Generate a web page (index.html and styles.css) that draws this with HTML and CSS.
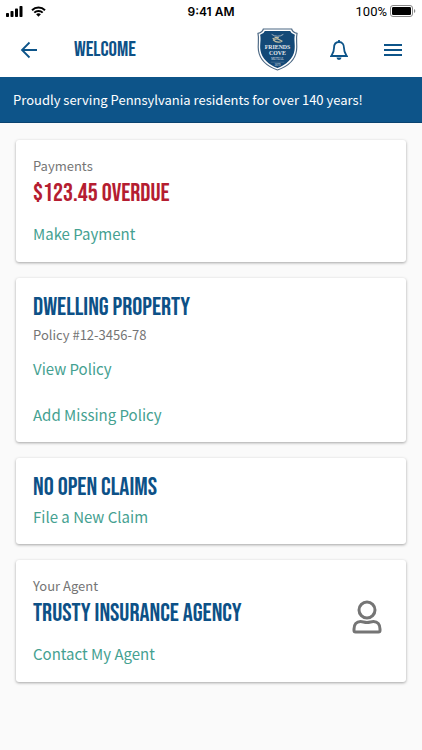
FILE: index.html
```html
<!DOCTYPE html>
<html lang="en">
<head>
    <meta charset="UTF-8">
    <meta name="viewport" content="width=device-width, initial-scale=1.0">
    <title>Friends Cove Mutual</title>
    <link rel="stylesheet" href="styles.css">
</head>
<body>
    <div class="status-bar">
        <div class="status-left">
            <svg width="17" height="11" viewBox="0 0 17 11" aria-hidden="true">
                <rect x="0" y="7" width="3" height="4" rx="0.8"/>
                <rect x="4.5" y="5" width="3" height="6" rx="0.8"/>
                <rect x="9" y="2.5" width="3" height="8.5" rx="0.8"/>
                <rect x="13.5" y="0" width="3" height="11" rx="0.8"/>
            </svg>
            <svg width="15" height="11" viewBox="0 0 15 11" aria-hidden="true">
                <path d="M1 4.2a9.3 9.3 0 0 1 13 0M3.3 6.6a6 6 0 0 1 8.4 0" fill="none" stroke="#000" stroke-width="2"/>
                <path d="M5.1 8.3a3.5 3.5 0 0 1 4.8 0L7.5 10.8z"/>
            </svg>
        </div>
        <span class="status-time">9:41 AM</span>
        <div class="status-right">
            <span>100%</span>
            <svg width="26" height="12" viewBox="0 0 26 12" aria-hidden="true">
                <rect x="0.5" y="0.5" width="22" height="11" rx="2.5" fill="none" stroke="#888"/>
                <rect x="2" y="2" width="19" height="8" rx="1.2"/>
                <path d="M24 4v4q1.300-.6 1.300-2t-1.300-2" fill="#888"/>
            </svg>
        </div>
    </div>

    <header class="header">
        <button class="icon-button" aria-label="Back">
            <svg width="18" height="18" viewBox="0 0 18 18" aria-hidden="true">
                <path d="M17 9H2M9.500 1.500L2 9L9.500 16.500"/>
            </svg>
        </button>
        <h1>WELCOME</h1>
        <svg class="logo" width="41" height="43" viewBox="0 0 42 44" role="img" aria-label="Friends Cove Mutual">
            <path d="M6.500 1H35.500Q36.500 4.500 41 5.500C39.500 12 41.500 17 40.500 23C39 33 31 39.500 21 43C11 39.500 3 33 1.500 23C.5 17 2.500 12 1 5.500Q5.500 4.500 6.500 1Z" fill="#fff" stroke="#4c6884" stroke-width="1.200"/>
            <path d="M8 3H34Q35 6 38.800 7C37.600 13 39.400 17 38.400 23C37 31.500 30 37.500 21 41C12 37.500 5 31.500 3.600 23C2.600 17 4.400 13 3.200 7Q7 6 8 3Z" fill="#134977"/>
            <path d="M15 6.500l3 1.500q3 .8 6 0l3-1.500" fill="none" stroke="#9eb0bd"/>
            <path d="M16 10.500q2 1.500 5 .5l5 2.500M16.500 12q4 4 9.500 1.500M18 9.500l4.500 .5" fill="none" stroke="#c3bfa2" stroke-width="1.200"/>
            <path d="M14 35h14" stroke="#6d8ba5" stroke-width=".5"/>
            <text x="21" y="22" class="logo-name">FRIENDS</text>
            <text x="21" y="28" class="logo-name">COVE</text>
            <text x="21" y="33" class="logo-small">MUTUAL</text>
            <text x="21" y="39" class="logo-small">1879</text>
        </svg>
        <button class="icon-button" aria-label="Notifications">
            <svg width="18" height="22" viewBox="0 0 18 22" aria-hidden="true">
                <path d="M9 3C5.600 3 4 5.500 4 9C4 13.500 2.500 15 1.200 17H16.800C15.500 15 14 13.500 14 9C14 5.500 12.400 3 9 3Z"/>
                <path d="M9 1V3"/>
                <path d="M6.500 18.500a2.500 2.500 0 0 0 5 0z" fill="currentColor" stroke="none"/>
            </svg>
        </button>
        <button class="icon-button" aria-label="Menu">
            <svg width="20" height="14" viewBox="0 0 20 14" aria-hidden="true">
                <path d="M1 2H19M1 7H19M1 12H19"/>
            </svg>
        </button>
    </header>

    <div class="banner">Proudly serving Pennsylvania residents for over 140 years!</div>

    <main class="cards">
        <section class="card">
            <p class="label">Payments</p>
            <h2 class="overdue">$123.45 OVERDUE</h2>
            <a class="action" href="#">Make Payment</a>
        </section>

        <section class="card card-titled">
            <h2>DWELLING PROPERTY</h2>
            <p class="label">Policy #12-3456-78</p>
            <div class="actions">
                <a href="#">View Policy</a>
                <a href="#">Add Missing Policy</a>
            </div>
        </section>

        <section class="card card-titled">
            <h2>NO OPEN CLAIMS</h2>
            <a href="#">File a New Claim</a>
        </section>

        <section class="card card-agent">
            <div>
                <p class="label">Your Agent</p>
                <h2>TRUSTY INSURANCE AGENCY</h2>
                <a class="action" href="#">Contact My Agent</a>
            </div>
            <svg width="30" height="34" viewBox="0 0 30 34" aria-hidden="true">
                <circle cx="15" cy="10" r="8"/>
                <path d="M3.500 32H26.500Q28 32 28 30.500V29C28 24.500 25.500 21.500 21.500 21.500C19 21.500 18 22.500 15 22.500S11 21.500 8.500 21.500C4.500 21.500 2 24.500 2 29V30.500Q2 32 3.500 32Z"/>
            </svg>
        </section>
    </main>
</body>
</html>
```
FILE: styles.css
```css
* {
    box-sizing: border-box;
}
body {
    font-family: "Noto Sans CJK SC", "Open Sans", sans-serif;
    margin: 0;
    background-color: #fafafa;
    color: #757575;
}
h1, h2, p {
    margin: 0;
}
h1, h2 {
    font-family: "Bebas Neue", "Liberation Sans Narrow", "Liberation Sans", sans-serif;
    font-weight: normal;
    color: #0d5187;
}
.status-bar {
    display: grid;
    grid-template-columns: 1fr auto 1fr;
    align-items: center;
    height: 22px;
    padding: 0 6px;
    background: #fff;
    color: #000;
    font-family: Roboto, sans-serif;
    font-size: 13px;
}
.status-left, .status-right {
    display: flex;
    align-items: center;
    gap: 8px;
}
.status-right {
    justify-content: flex-end;
    gap: 3px;
}
.status-time {
    font-family: Inter, sans-serif;
    font-size: 12px;
    font-weight: 600;
}
.header {
    display: flex;
    align-items: center;
    height: 55px;
    padding: 0 16px;
    background: #fff;
}
h1 {
    flex: 1;
    padding-left: 32px;
    font-size: 21px;
    line-height: 24px;
}
.icon-button {
    display: flex;
    align-items: center;
    justify-content: center;
    width: 26px;
    height: 32px;
    padding: 0;
    border: none;
    background: none;
    color: #0d5489;
    cursor: pointer;
}
.icon-button svg {
    fill: none;
    stroke: currentColor;
    stroke-width: 1.8;
}
.logo ~ .icon-button {
    margin-left: 28px;
}
.logo text {
    fill: #e4e8ec;
    font-family: "Liberation Serif", serif;
    text-anchor: middle;
}
.logo .logo-name {
    font-size: 6px;
    font-weight: bold;
}
.logo-small {
    font-size: 3px;
}
.banner {
    padding: 12px 13px 11px;
    background-color: #0d5489;
    border-bottom: 1px solid #0a4370;
    color: #fff;
    font-size: 13px;
    line-height: 22px;
}
.cards {
    display: flex;
    flex-direction: column;
    gap: 16px;
    padding: 17px 16px;
}
.card {
    padding: 16px 17px;
    background: #fff;
    border-radius: 3px;
    box-shadow: 0 1px 3px rgba(0, 0, 0, 0.35);
}
.card-titled {
    padding-top: 13px;
    padding-bottom: 15px;
}
.card h2 {
    font-size: 25px;
    line-height: 34px;
}
.card .label + h2 {
    margin-top: 1px;
}
.card .overdue {
    color: #b51d31;
}
.label {
    font-size: 13px;
    line-height: 20px;
}
.card a {
    display: block;
    width: fit-content;
    color: #45a191;
    font-size: 15px;
    line-height: 24px;
    text-decoration: none;
}
.card .action {
    margin-top: 11px;
}
.actions {
    display: flex;
    flex-direction: column;
    gap: 22px;
    padding-top: 12px;
}
.card-agent {
    display: flex;
    align-items: flex-start;
    justify-content: space-between;
    padding-right: 24px;
}
.card-agent svg {
    margin-top: 24px;
    fill: none;
    stroke: #757575;
    stroke-width: 3;
}
```
